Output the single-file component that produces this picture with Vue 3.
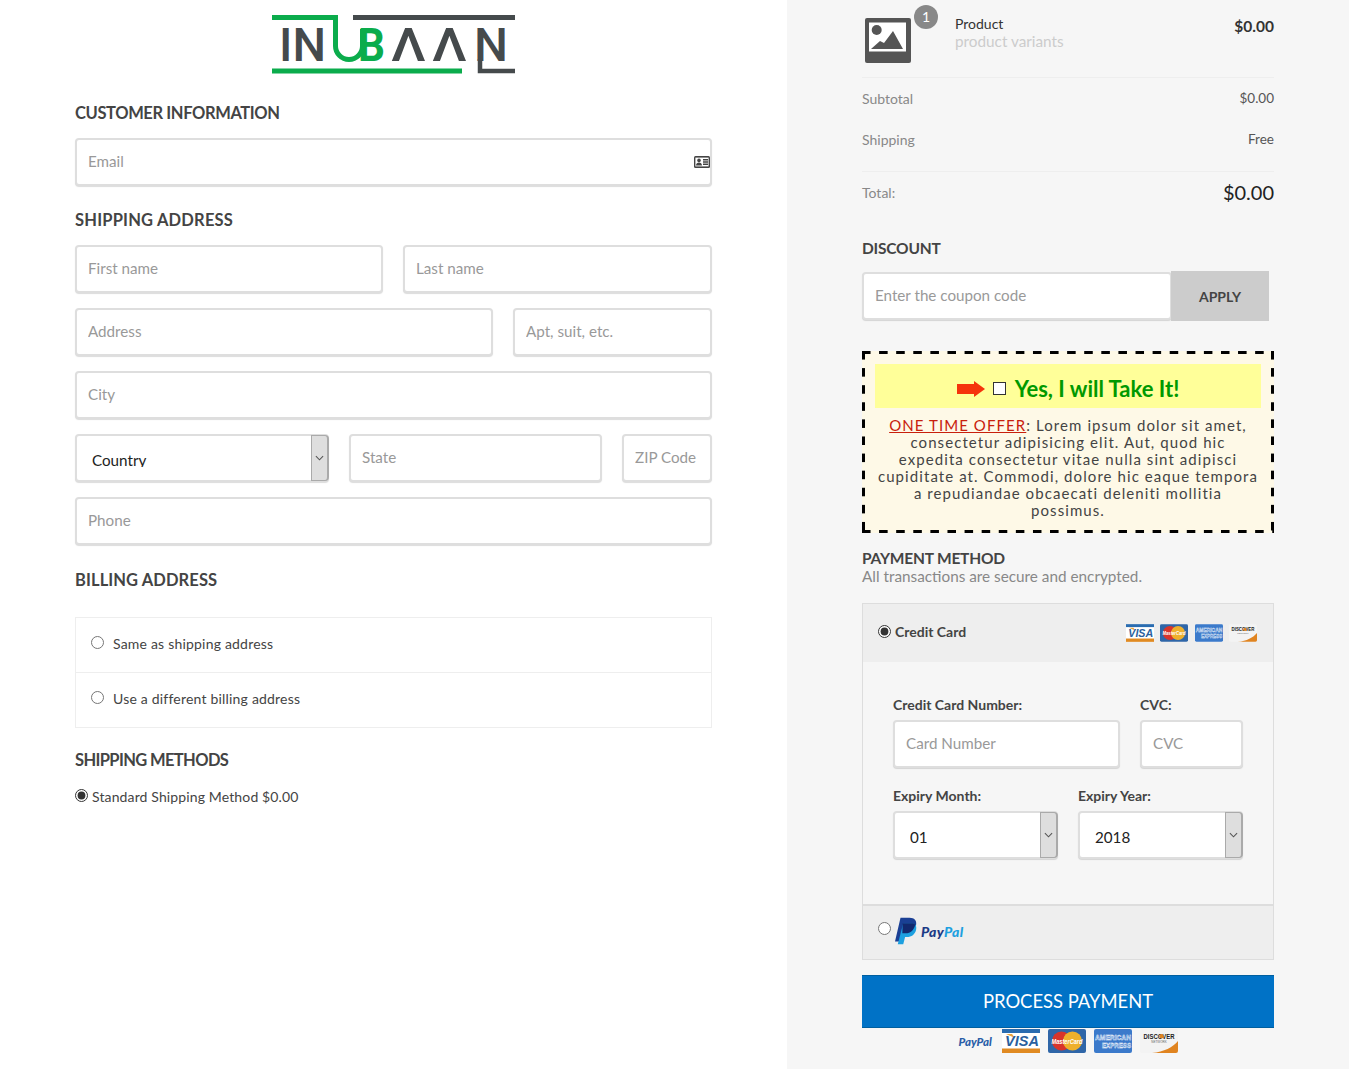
<script setup>
const billing = ['Same as shipping address', 'Use a different billing address']
const offer = `: Lorem ipsum dolor sit amet,
consectetur adipisicing elit. Aut, quod hic
expedita consectetur vitae nulla sint adipisci
cupiditate at. Commodi, dolore hic eaque tempora
a repudiandae obcaecati deleniti mollitia
possimus.`
</script>

<template>
  <div class="page">
    <svg class="sprites" aria-hidden="true">
      <symbol id="visa" viewBox="0 0 38 24">
        <rect width="38" height="24" rx="1" fill="#fff" />
        <rect width="38" height="4" fill="#2a6cb0" />
        <rect y="19.5" width="38" height="4.5" fill="#e08a22" />
        <path d="M4 5l6 0 3 4z" fill="#e8a23c" />
        <text x="20" y="17" text-anchor="middle" font-size="14.5" font-weight="900" font-style="italic" fill="#2a5f9e" font-family="Liberation Sans">VISA</text>
      </symbol>
      <symbol id="mc" viewBox="0 0 38 24">
        <rect width="38" height="24" rx="2" fill="#2f66a8" />
        <circle cx="13.5" cy="12" r="9.5" fill="#d8342b" />
        <circle cx="24.5" cy="12" r="9.5" fill="#eeb02c" />
        <text x="19" y="14.5" text-anchor="middle" font-size="7.6" font-weight="700" font-style="italic" fill="#fff" font-family="Liberation Sans" textLength="31" lengthAdjust="spacingAndGlyphs">MasterCard</text>
      </symbol>
      <symbol id="amex" viewBox="0 0 38 24">
        <rect width="38" height="24" rx="2" fill="#3b7acb" />
        <text x="1" y="10.5" font-size="8" font-weight="700" fill="none" stroke="#fff" stroke-width=".45" font-family="Liberation Sans" textLength="36" lengthAdjust="spacingAndGlyphs">AMERICAN</text>
        <text x="8" y="19" font-size="8" font-weight="700" fill="none" stroke="#fff" stroke-width=".45" font-family="Liberation Sans" textLength="29" lengthAdjust="spacingAndGlyphs">EXPRESS</text>
      </symbol>
      <symbol id="discover" viewBox="0 0 38 24">
        <rect width="38" height="24" rx="2" fill="#f3f3f3" />
        <path d="M12 24c12-1 21-6 26-12v10a2 2 0 0 1-2 2z" fill="#e08420" />
        <text x="19" y="9.5" text-anchor="middle" font-size="6.8" font-weight="700" fill="#222" font-family="Liberation Sans" textLength="31" lengthAdjust="spacingAndGlyphs">DISCOVER</text>
        <circle cx="21.5" cy="7.2" r="2.2" fill="#e08420" />
        <text x="19" y="14" text-anchor="middle" font-size="3" fill="#666" font-family="Liberation Sans">NETWORK</text>
      </symbol>
    </svg>

    <main class="left">
      <svg class="logo" viewBox="0 0 243 59" role="img" aria-label="Inubaan">
        <g font-family="Roboto" font-size="47" font-weight="500" fill="#454a4c">
          <text x="7" y="46" textLength="47" lengthAdjust="spacingAndGlyphs">IN</text>
          <text x="119" y="46" textLength="35" lengthAdjust="spacingAndGlyphs">Λ</text>
          <text x="160" y="46" textLength="35" lengthAdjust="spacingAndGlyphs">Λ</text>
          <text x="202" y="46" textLength="34" lengthAdjust="spacingAndGlyphs">N</text>
        </g>
        <text x="86" y="46" font-family="Roboto" font-size="47" font-weight="700" fill="#0bac4c" textLength="27" lengthAdjust="spacingAndGlyphs">B</text>
        <path d="M0 2.5H63.5V31a13.5 13.5 0 0 0 27 0V14" fill="none" stroke="#0bac4c" stroke-width="5" />
        <path d="M0 56H190" stroke="#0bac4c" stroke-width="5" />
        <path d="M81 2.5H243" stroke="#454a4c" stroke-width="5" />
        <path d="M208 44V56H243" fill="none" stroke="#454a4c" stroke-width="4.5" />
      </svg>

      <h2 class="title first">CUSTOMER INFORMATION</h2>
      <div class="control">
        <input class="field" placeholder="Email" />
        <svg class="card-glyph" viewBox="0 0 16 12">
          <rect width="16" height="12" rx="1.5" fill="#444" />
          <rect x="1.4" y="1.6" width="13.2" height="8.8" fill="#fff" />
          <circle cx="5" cy="4.4" r="1.8" fill="#444" />
          <path d="M2 9.6c0-4 6-4 6 0zM9 3h5v1.4H9zM9 5.3h5v1.4H9zM9 7.6h5V9H9z" fill="#444" />
        </svg>
      </div>

      <h2 class="title address">SHIPPING ADDRESS</h2>
      <div class="stack">
        <div class="row two">
          <input class="field" placeholder="First name" />
          <input class="field" placeholder="Last name" />
        </div>
        <div class="row addr">
          <input class="field" placeholder="Address" />
          <input class="field" placeholder="Apt, suit, etc." />
        </div>
        <input class="field" placeholder="City" />
        <div class="row region">
          <div class="select">
            <select class="native"><option>Country</option></select>
            <span class="arrow"><svg viewBox="0 0 10 6"><path d="M1 1l4 4 4-4" /></svg></span>
          </div>
          <input class="field" placeholder="State" />
          <input class="field" placeholder="ZIP Code" />
        </div>
        <input class="field" placeholder="Phone" />
      </div>

      <h2 class="title billing">BILLING ADDRESS</h2>
      <div class="billing-box">
        <label v-for="item in billing" :key="item" class="billing-row">
          <input type="radio" name="billing" />
          <span>{{ item }}</span>
        </label>
      </div>

      <h2 class="title methods">SHIPPING METHODS</h2>
      <label class="method">
        <input type="radio" name="method" checked />
        <span>Standard Shipping Method $0.00</span>
      </label>
    </main>

    <aside class="right">
      <div class="product">
        <div class="thumb">
          <svg viewBox="0 0 46 46">
            <rect width="46" height="45" rx="2" fill="#555" />
            <rect x="4" y="4.5" width="37" height="29" fill="#fff" />
            <circle cx="11.7" cy="12" r="5" fill="#555" />
            <path d="M6 31l9-8 4 2 9-12 10 18z" fill="#555" />
          </svg>
          <span class="badge">1</span>
        </div>
        <div class="product-text">
          <div class="product-name">Product</div>
          <div class="product-variant">product variants</div>
        </div>
        <div class="product-price">$0.00</div>
      </div>

      <div class="summary">
        <div class="line"><span>Subtotal</span><b>$0.00</b></div>
        <div class="line"><span>Shipping</span><b>Free</b></div>
      </div>
      <div class="line total"><span>Total:</span><strong>$0.00</strong></div>

      <h2 class="side-title discount">DISCOUNT</h2>
      <div class="coupon">
        <input class="field" placeholder="Enter the coupon code" />
        <button class="apply">APPLY</button>
      </div>

      <section class="offer">
        <div class="take">
          <svg class="red-arrow" viewBox="0 0 28 16"><path d="M0 3h17V0l11 8-11 8v-3H0z" /></svg>
          <input class="box" type="checkbox" />
          <span>Yes, I will Take It!</span>
        </div>
        <p><u>ONE TIME OFFER</u>{{ offer }}</p>
      </section>

      <h2 class="side-title payment">PAYMENT METHOD</h2>
      <p class="secure">All transactions are secure and encrypted.</p>

      <div class="pay-box">
        <div class="pay-head">
          <label class="pay-label">
            <input type="radio" name="pay" checked />
            <span>Credit Card</span>
          </label>
          <div class="mini-cards">
            <svg><use href="#visa" /></svg>
            <svg><use href="#mc" /></svg>
            <svg><use href="#amex" /></svg>
            <svg><use href="#discover" /></svg>
          </div>
        </div>
        <div class="pay-body">
          <div class="card-row">
            <label class="cell"><span>Credit Card Number:</span><input class="field" placeholder="Card Number" /></label>
            <label class="cell"><span>CVC:</span><input class="field" placeholder="CVC" /></label>
          </div>
          <div class="card-row even">
            <label class="cell"><span>Expiry Month:</span>
              <div class="select">
                <select class="native"><option>01</option></select>
                <span class="arrow"><svg viewBox="0 0 10 6"><path d="M1 1l4 4 4-4" /></svg></span>
              </div>
            </label>
            <label class="cell"><span>Expiry Year:</span>
              <div class="select">
                <select class="native"><option>2018</option></select>
                <span class="arrow"><svg viewBox="0 0 10 6"><path d="M1 1l4 4 4-4" /></svg></span>
              </div>
            </label>
          </div>
        </div>
        <div class="pay-foot">
          <input type="radio" name="pay" />
          <svg class="pp-mark" viewBox="0 0 24 29">
            <path d="M6 0h10c5 0 8 3 7 8-1 6-5 9-11 9H8l-2 9H0z" fill="#1a3f94" />
            <path d="M9 6h9c4 0 6 3 5 7-1 5-5 8-10 8h-2l-2 8H3z" fill="#1da0e0" />
            <path d="M8.4 6H18c1.6 0 3 .5 4 1.4-.8 5.8-5 9.6-10.5 9.6H8z" fill="#12286e" />
          </svg>
          <span class="pp-word"><i>Pay</i><em>Pal</em></span>
        </div>
      </div>

      <button class="process">PROCESS PAYMENT</button>

      <div class="trust">
        <span class="pp-word muted"><i>PayPal</i></span>
        <svg><use href="#visa" /></svg>
        <svg><use href="#mc" /></svg>
        <svg><use href="#amex" /></svg>
        <svg><use href="#discover" /></svg>
      </div>
    </aside>
  </div>
</template>

<style>
html, body { margin: 0; padding: 0; background: #fff; }
</style>

<style scoped>
* { box-sizing: border-box; }
.page {
  display: flex;
  width: 100%;
  height: 1069px;
  overflow: hidden;
  font-family: "Lato", "Open Sans", sans-serif;
  font-size: 15px;
  color: #444;
  background: #fff;
}
.sprites { display: none; }
.left { width: 787px; padding: 15px 75px 0; flex: none; }
.right { flex: 1; background: #f6f6f6; padding: 0 75px; min-width: 0; }

.logo { display: block; width: 243px; height: 59px; margin: 0 auto; }

.title {
  margin: 24px 0 15px;
  font-size: 16.5px;
  line-height: 20px;
  font-weight: 700;
  color: #444;
}
.title.first { margin-top: 29px; letter-spacing: -.38px; }
.title.address { letter-spacing: .2px; }
.title.billing { margin: 25px 0 27px; letter-spacing: .1px; }
.title.methods { margin: 22px 0 0; letter-spacing: -.63px; }

.field {
  display: block;
  width: 100%;
  height: 48px;
  padding: 0 11px 2px;
  border: 2px solid #dedede;
  border-radius: 4px;
  background: #fff;
  box-shadow: 0 1px 1px rgba(0, 0, 0, .14);
  font: inherit;
  font-size: 15.2px;
  color: #333;
  outline: none;
}
.field::placeholder { color: #999; opacity: 1; }

.control { position: relative; }
.card-glyph { position: absolute; top: 18px; right: 2px; width: 16px; height: 12px; }

.stack { display: flex; flex-direction: column; gap: 15px; }
.row { display: grid; gap: 20px; }
.two { grid-template-columns: 308px 309px; }
.addr { grid-template-columns: 418px 199px; }
.region { grid-template-columns: 254px 253px 90px; }

.select { position: relative; height: 48px; }
.native {
  display: block;
  width: 100%;
  height: 48px;
  padding: 15px 15px 13px;
  border: 2px solid #dedede;
  border-radius: 4px;
  background: #fff;
  box-shadow: 0 1px 1px rgba(0, 0, 0, .14);
  font: inherit;
  font-size: 15.2px;
  color: #222;
  appearance: none;
  outline: none;
}
.arrow {
  position: absolute;
  top: 1px;
  right: 0;
  bottom: 1px;
  width: 18px;
  display: flex;
  align-items: center;
  justify-content: center;
  background: #dedede;
  border: 1px solid #aaa;
  border-right-width: 2px;
  border-radius: 0 4px 4px 0;
  pointer-events: none;
}
.arrow svg { width: 9px; height: 6px; fill: none; stroke: #555; stroke-width: 1.2; }

.billing-box { border: 1px solid #eee; }
.billing-row {
  display: flex;
  align-items: center;
  height: 54px;
  padding: 0 0 3px 15px;
  font-size: 14px;
  letter-spacing: .2px;
  color: #444;
}
.billing-row + .billing-row { height: 55px; border-top: 1px solid #eee; }
.billing-row input { margin: 0 9px 2px 0; width: 13px; height: 13px; accent-color: #333; }

.method { display: flex; align-items: center; height: 53px; font-size: 14px; letter-spacing: .13px; color: #444; margin-top: 0; }
.method input { margin: 0 4px 2px 0; width: 13px; height: 13px; accent-color: #333; }

.product { display: flex; height: 78px; border-bottom: 1px solid #eee; }
.thumb { position: relative; width: 46px; height: 46px; margin: 18px 0 0 3px; flex: none; }
.thumb svg { display: block; width: 46px; height: 46px; }
.badge {
  position: absolute;
  top: -13px;
  left: 49px;
  width: 24px;
  height: 24px;
  border-radius: 50%;
  background: #888;
  color: #fff;
  font-size: 14px;
  line-height: 24px;
  text-align: center;
}
.product-text { margin: 15px 0 0 44px; }
.product-name { font-size: 14px; line-height: 17px; color: #333; }
.product-variant { font-size: 15.3px; line-height: 18px; color: #ccc; }
.product-price { margin: 16px 0 0 auto; font-size: 15.5px; line-height: 20px; font-weight: 700; color: #333; }

.summary { padding-bottom: 10px; border-bottom: 1px solid #eee; }
.line {
  display: flex;
  align-items: center;
  justify-content: space-between;
  height: 42px;
  padding-bottom: 2px;
  font-size: 14px;
  color: #888;
}
.line + .line { margin-top: -1px; }
.line b { font-weight: 400; font-size: 13.5px; color: #555; }
.total strong { font-size: 20px; font-weight: 400; color: #222; }

.side-title { margin: 0; font-size: 15.5px; letter-spacing: -.2px; line-height: 20px; font-weight: 700; color: #444; }
.discount { margin: 24px 0 13px; }
.coupon { display: flex; align-items: center; width: 407px; height: 50px; }
.coupon .field { width: 310px; flex: none; }
.apply {
  width: 98px;
  height: 50px;
  margin-left: -1px;
  flex: none;
  border: 0;
  background: #ccc;
  font: inherit;
  font-size: 14px;
  font-weight: 700;
  color: #444;
}

.offer {
  height: 182px;
  margin-top: 30px;
  padding: 13px;
  background-color: #fef9e7;
  background-image:
    linear-gradient(90deg, #000 9px, transparent 9px),
    linear-gradient(90deg, #000 9px, transparent 9px),
    linear-gradient(#000 9px, transparent 9px),
    linear-gradient(#000 9px, transparent 9px);
  background-size: 17.1px 3px, 17.1px 3px, 3px 17.1px, 3px 17.1px;
  background-position: 0 0, 0 100%, 0 0, 100% 0;
  background-repeat: repeat-x, repeat-x, repeat-y, repeat-y;
}
.take {
  display: flex;
  align-items: center;
  justify-content: center;
  height: 44px;
  padding-top: 5px;
  background: #ffff99;
  font-size: 22px;
  font-weight: 700;
  color: #090;
}
.red-arrow { width: 28px; height: 16px; margin-right: 8px; fill: #f5330b; }
.box {
  width: 13px;
  height: 13px;
  margin: 0 9px 0 0;
  appearance: none;
  border: 1px solid #333;
  background: #fff;
}
.offer p {
  margin: 9px -4px 0;
  font-size: 15px;
  line-height: 17px;
  letter-spacing: 1.08px;
  text-align: center;
  white-space: pre-line;
  color: #444;
}
.offer u { color: #c8200c; }

.payment { margin-top: 15px; }
.secure { margin: -1px 0 18px; line-height: 18px; font-size: 15.3px; color: #888; }

.pay-box { height: 357px; border: 1px solid #ddd; display: flex; flex-direction: column; }
.pay-head {
  display: flex;
  align-items: center;
  justify-content: space-between;
  height: 58px;
  padding: 0 16px 3px 15px;
  background: #eee;
}
.pay-label { display: flex; align-items: center; font-size: 14px; font-weight: 700; color: #444; }
.pay-label input { width: 13px; height: 13px; margin: 0 4px 0 0; accent-color: #333; }
.mini-cards { display: flex; gap: 6.3px; margin-top: 3px; }
.mini-cards svg { width: 28px; height: 18px; }
.pay-body { flex: 1; padding: 34px 30px 0; }
.card-row { display: grid; grid-template-columns: 227px 103px; gap: 20px; }
.card-row.even { grid-template-columns: 165px 165px; margin-top: 19px; }
.cell { display: block; }
.cell > span:first-child { display: block; height: 18px; margin-bottom: 6px; font-size: 14px; line-height: 18px; font-weight: 700; color: #444; }
.pay-foot {
  display: flex;
  align-items: center;
  height: 55px;
  padding: 0 0 3px 15px;
  background: #eee;
  border-top: 2px solid #ddd;
}
.pay-foot input { width: 13px; height: 13px; margin: 0 4px 6px 0; accent-color: #333; }
.pp-mark { width: 22px; height: 28px; }
.pp-word { margin-left: 4px; font-size: 14px; letter-spacing: .3px; font-weight: 900; }
.pp-word i { color: #1b3a86; font-style: italic; }
.pp-word em { color: #1da0e0; font-style: italic; }
.pp-word.muted { margin: 0; font-size: 11.5px; letter-spacing: 0; width: 35px; }
.pp-word.muted i { color: #2a5ea8; }

.process {
  display: block;
  width: 100%;
  height: 53px;
  margin-top: 15px;
  padding: 0 0 2px;
  border: 0;
  border-top: 1px solid #005f9f;
  border-bottom: 1px solid #005f9f;
  background: #0072c6;
  font: inherit;
  font-size: 18.4px;
  color: #fff;
}
.trust { display: flex; align-items: center; justify-content: center; gap: 8px; height: 24px; margin-top: 1px; }
.trust svg { width: 38px; height: 24px; }
</style>
